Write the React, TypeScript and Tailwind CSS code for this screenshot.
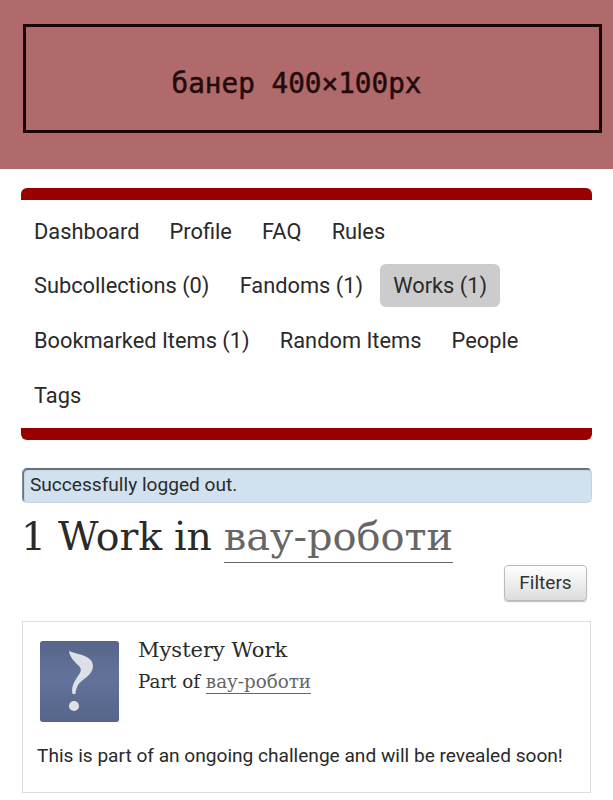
const serif = "font-['DejaVu_Serif',serif]";

function NavItem({ label, active }: { label: string; active?: boolean }) {
  return (
    <a className={`px-[13px] py-[6px] mr-[4.2px] rounded-[6px] leading-[31px] text-[21.8px] text-[#2a2a2a] ${active ? 'bg-[#cccccc]' : ''}`}>
      {label}
    </a>
  );
}

function Row({ children }: { children: React.ReactNode }) {
  return <div className="flex h-[54.6px] items-center">{children}</div>;
}

export default function App() {
  return (
    <div className="w-[613px] h-[800px] overflow-hidden bg-white font-['Roboto',sans-serif] text-[#2a2a2a]">
      <header className="h-[169px] bg-[#b06a6c] px-[23px] pt-[24px]">
        <div className="h-[109px] w-[579px] border-[3px] border-[#1c0506] flex items-center justify-center pt-[10px] pr-[32px] font-['DejaVu_Sans_Mono',monospace] text-[27.7px] text-[#230a0b] [-webkit-text-stroke:0.5px_#230a0b]">
          банер 400×100px
        </div>
      </header>

      <nav className="mx-[21px] mt-[19px] border-y-[12px] border-[#990000] rounded-[6px] h-[252px]">
        <div className="pt-[4px]">
          <Row>
            <NavItem label="Dashboard" />
            <NavItem label="Profile" />
            <NavItem label="FAQ" />
            <NavItem label="Rules" />
          </Row>
          <Row>
            <NavItem label="Subcollections (0)" />
            <NavItem label="Fandoms (1)" />
            <NavItem label="Works (1)" active />
          </Row>
          <Row>
            <NavItem label="Bookmarked Items (1)" />
            <NavItem label="Random Items" />
            <NavItem label="People" />
          </Row>
          <Row>
            <NavItem label="Tags" />
          </Row>
        </div>
      </nav>

      <div className="mx-[22px] mt-[28px] h-[35px] w-[570px] rounded-[5px] bg-[#d1e1ef] border border-[#c3d3e2] border-t-[#5f6c78] border-l-[#7b8894] shadow-[inset_1px_1px_1px_#5f6c78] pl-[7px] flex items-center text-[19.1px] text-[#2a2a2a]">
        Successfully logged out.
      </div>

      <h2 className={`${serif} mx-[21px] mt-[8px] h-[54px] text-[39.4px] leading-[50px] text-[#2a2a2a] [word-spacing:-0.7px]`}>
        1 Work in <a className="text-[39.9px] text-[#666666] border-b border-[#666666] pb-[3px]">вау-роботи</a>
      </h2>

      <div className="flex justify-end mx-[26px]">
        <button className="h-[36px] w-[83px] rounded-[4px] border border-[#bbbbbb] bg-gradient-to-b from-[#ffffff] to-[#dddddd] text-[19px] text-[#333333] shadow-[0_1px_1px_#bbbbbb]">
          Filters
        </button>
      </div>

      <section className="mx-[22px] mt-[20px] h-[172px] border border-[#dddddd] pl-[14px] pr-[8px]">
        <div className="flex pt-[19px]">
          <svg width="79" height="81" viewBox="0 0 79 81" className="ml-[3px] shrink-0 rounded-[2px]">
            <defs>
              <linearGradient id="g" x1="0" y1="0" x2="0" y2="1">
                <stop offset="0" stopColor="#56668a" />
                <stop offset="0.45" stopColor="#62729a" />
                <stop offset="1" stopColor="#566689" />
              </linearGradient>
            </defs>
            <rect width="79" height="81" rx="2" fill="url(#g)" />
            <path d="M29 10 C40 14 53 15 53 25 C53 34 42 38 38 44 C36 48 35.5 50 35.5 53 L32.5 53 C31 46 34 41 38 35 C41 31 42 28 39 25 C35 21 30 17 29 10 Z" fill="#dde0e8" className="blur-[0.4px]" />
            <circle cx="34" cy="65" r="5" fill="#dde0e8" className="blur-[0.4px]" />
          </svg>
          <div className={`${serif} ml-[19px] text-[#2a2a2a]`}>
            <div className="text-[21px] leading-[28px] mt-[-5px]">Mystery Work</div>
            <div className="text-[18.3px] leading-[28px] mt-[4px]">
              Part of <a className="text-[#666666] border-b border-[#666666] pb-[1px]">вау-роботи</a>
            </div>
          </div>
        </div>
        <p className="mt-[20px] text-[19.1px] leading-[28px] whitespace-nowrap text-[#2a2a2a]">
          This is part of an ongoing challenge and will be revealed soon!
        </p>
      </section>
    </div>
  );
}
